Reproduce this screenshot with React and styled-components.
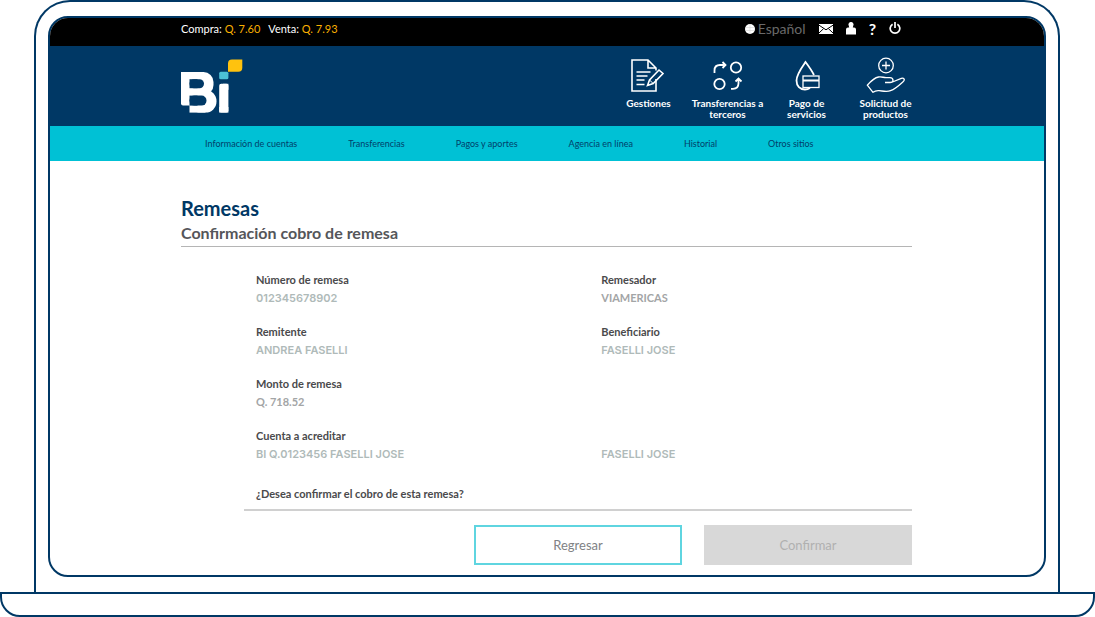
import React from 'react';
import styled, { createGlobalStyle } from 'styled-components';

const GlobalStyle = createGlobalStyle`
  * {
    box-sizing: border-box;
  }

  body {
    margin: 0;
    background: #fff;
    font-family: Lato, 'Open Sans', sans-serif;
  }

  h1, h2, p, dl, dd {
    margin: 0;
  }

  button {
    font-family: inherit;
    cursor: pointer;
  }
`;

const Lid = styled.div`
  margin: 0 35px 0 34px;
  padding: 14px 12px 15px;
  border: 2px solid #003865;
  border-bottom: none;
  border-radius: 36px 36px 0 0;
`;

const Screen = styled.div`
  border: 2px solid #003865;
  border-radius: 20px;
  overflow: hidden;
`;

const Base = styled.div`
  height: 25px;
  border: 2px solid #003865;
  border-radius: 0 0 20px 20px;
`;

const TopBar = styled.div`
  display: flex;
  justify-content: space-between;
  align-items: flex-start;
  height: 28px;
  padding: 0 143px 0 131px;
  background: #000;
`;

const Rates = styled.p`
  display: flex;
  gap: 8px;
  padding-top: 3px;
  color: #fff;
  font-size: 11px;
  line-height: 16px;
`;

const Rate = styled.span`
  color: #f9b000;
`;

const Tools = styled.div`
  display: flex;
  align-items: center;
  gap: 13px;
  height: 22px;
`;

const ToolButton = styled.button`
  display: flex;
  align-items: center;
  gap: 3px;
  padding: 0;
  border: none;
  background: none;
  color: ${(props) => props.$color || '#fff'};
  font-size: ${(props) => props.$size || '14px'};
  font-weight: ${(props) => props.$weight || 400};
  line-height: 20px;
`;

const Header = styled.header`
  display: flex;
  justify-content: space-between;
  height: 80px;
  padding: 11px 119px 0 131px;
  background: #003865;
`;

const Brand = styled.div`
  padding-top: 2px;
`;

const Shortcuts = styled.nav`
  display: grid;
  grid-template-columns: repeat(4, 79px);
`;

const Shortcut = styled.a`
  display: flex;
  flex-direction: column;
  align-items: center;
  gap: 5px;
  padding: 0 3px;
  color: #fff;
  font-size: 10px;
  font-weight: 700;
  line-height: 11px;
  text-align: center;
  text-decoration: none;
`;

const MainNav = styled.nav`
  display: flex;
  align-items: center;
  gap: 51px;
  height: 35px;
  padding: 0 131px 0 155px;
  background: #00c1d5;
`;

const NavLink = styled.a`
  color: #00406a;
  font-size: 9px;
  line-height: 16px;
  text-decoration: none;
  white-space: nowrap;
`;

const Content = styled.main`
  padding: 35px 132px 10px 131px;
`;

const Title = styled.h1`
  color: #003865;
  font-size: 20px;
  font-weight: 700;
  line-height: 24px;
`;

const Subtitle = styled.h2`
  border-bottom: 1px solid #b5b5b5;
  color: #55565a;
  font-size: 16px;
  font-weight: 700;
  line-height: 26px;
`;

const Details = styled.dl`
  display: grid;
  grid-template-columns: 10fr 9fr;
  row-gap: 16px;
  margin-top: 24px;
  padding-left: 75px;
`;

const Field = styled.div`
  display: flex;
  flex-direction: column;
  justify-content: flex-end;
`;

const Label = styled.dt`
  color: #4a4a4c;
  font-size: 11px;
  font-weight: 700;
  line-height: 18px;
`;

const Value = styled.dd`
  color: ${(props) => (props.$lato ? '#a3a5a6' : '#afbab9')};
  font-family: ${(props) => (props.$lato ? 'Lato' : 'Inter')}, sans-serif;
  font-size: 11px;
  font-weight: ${(props) => (props.$lato ? 700 : 600)};
  line-height: 18px;
`;

const Question = styled.p`
  margin: 22px 0 0 63px;
  padding: 0 0 6px 12px;
  border-bottom: 2px solid #d0d0d0;
  color: #4a4a4c;
  font-size: 11px;
  font-weight: 700;
  line-height: 18px;
`;

const Actions = styled.div`
  display: flex;
  justify-content: flex-end;
  gap: 22px;
  margin-top: 14px;
`;

const ActionButton = styled.button`
  width: 208px;
  height: 40px;
  border: 2px solid ${(props) => (props.disabled ? '#d8d8d8' : '#5fd5e0')};
  background: ${(props) => (props.disabled ? '#d8d8d8' : '#fff')};
  color: ${(props) => (props.disabled ? '#b0b0b0' : '#808285')};
  font-size: 13px;
`;

const Logo = () => (
  <svg width="62" height="54" viewBox="0 0 62 54" role="img" aria-label="Bi">
    <g fill="#fff">
      <rect x="0" y="13" width="32.5" height="23" rx="10" />
      <rect x="0" y="13" width="18" height="33.6" rx="2" />
      <rect x="0" y="13" width="8" height="8" />
      <rect x="8.5" y="31" width="27" height="22.6" rx="11" />
      <rect x="8.5" y="38" width="16" height="15.6" />
      <rect x="38.2" y="24.8" width="9.2" height="28.8" rx="2" />
      <rect x="42" y="24.8" width="5.4" height="6" />
      <rect x="38.2" y="48" width="9.2" height="5.6" />
    </g>
    <g fill="#003865">
      <rect x="8.5" y="20.2" width="14.5" height="9" rx="4.5" />
      <rect x="8.5" y="20.2" width="8" height="9" />
      <rect x="8.5" y="36.6" width="17" height="10" rx="5" />
      <rect x="8.5" y="36.6" width="8" height="10" />
    </g>
    <rect x="38.2" y="12.8" width="9.2" height="7.4" rx="1.5" fill="#4bc1d6" />
    <path d="M51 .4h10.3V8.8a4 4 0 0 1-4 4H47V4.4a4 4 0 0 1 4-4z" fill="#ffc20e" />
  </svg>
);

const GlobeIcon = () => (
  <svg width="10" height="10" viewBox="0 0 10 10">
    <circle cx="5" cy="5" r="5" fill="#fff" />
    <path d="M.5 3.5h9M.5 6.5h9M5 0v10" stroke="#ccc" strokeWidth=".5" />
  </svg>
);

const MailIcon = () => (
  <svg width="14" height="10" viewBox="0 0 14 10">
    <rect width="14" height="10" fill="#fff" />
    <path d="M0 1.2l7 4.6 7-4.6M0 9l4.6-4.4M14 9L9.4 4.6" fill="none" stroke="#000" strokeWidth="1" />
  </svg>
);

const UserIcon = () => (
  <svg width="10" height="14" viewBox="0 0 10 14">
    <path d="M5 0a2.5 2.5 0 0 1 2.3 3.6L6.8 5.500H8a2 2 0 0 1 2 2V12.500H0V7.500a2 2 0 0 1 2-2h1.200l-.5-1.900A2.500 2.500 0 0 1 5 0z" fill="#fff" />
  </svg>
);

const PowerIcon = () => (
  <svg width="12" height="14" viewBox="0 0 12 14" fill="none" stroke="#fff" strokeWidth="1.7">
    <path d="M3.6 2.2a4.8 4.8 0 1 0 4.8 0M6 0v6" />
  </svg>
);

const DocumentIcon = () => (
  <svg width="36" height="36" viewBox="2 0 36 36" fill="none" stroke="#fff" strokeWidth="1.6">
    <path d="M27 13.5V11L19 3H3v31h24V22M19 3v8h8" />
    <path d="M7.5 15h14M7.5 19h11M7.5 23h8M7.5 27.5h8" />
    <path d="M18.5 28.5l2-5.5L30 13l4 3.5-9.8 10z" />
    <path d="M20.5 23l3.7 3.5" strokeWidth="1" />
  </svg>
);

const TransferIcon = () => (
  <svg width="36" height="36" viewBox="0 0 36 36" fill="none" stroke="#fff" strokeWidth="1.8">
    <circle cx="26" cy="10.5" r="5.2" />
    <circle cx="9.5" cy="27" r="5.2" />
    <path d="M4.500 16v-2.500C4.500 10 6.500 8 10 8h4.500M12.500 5l3 3-3 3" />
    <path d="M21 31.800h2c3.500 0 5.500-2 5.500-5.500v-4M25.500 24.500l3-3 3 3" />
  </svg>
);

const PaymentIcon = () => (
  <svg width="36" height="36" viewBox="0 0 36 36" fill="none" stroke="#fff" strokeWidth="1.8">
    <path d="M25 18C22.5 13 19.5 9 16.5 5 12 11.500 7.500 17.500 7.500 23.500 7.500 29 11 32.500 16 32.500c2 0 3.500-.500 5-1.500" />
    <rect x="14" y="19" width="16" height="11.500" strokeWidth="1.300" />
    <path d="M14 23.500h16" strokeWidth="2" />
  </svg>
);

const HandIcon = () => (
  <svg width="40" height="36" viewBox="0 0 40 36" fill="none" stroke="#fff" strokeWidth="1.300" strokeLinejoin="round">
    <circle cx="20" cy="8.500" r="7.300" />
    <path d="M20 4.500v8M16 8.500h8" />
    <path d="M19 25.500h5c4 0 4-4.500 0-4.800h-4c-3-.2-4.500-1.200-7.500-.7C8 20.800 5 24 1.300 28.200L7 35.300c2-1.500 3.500-1.800 6-1.600 4 .3 8 1.300 11.500 0 5-1.800 9-5.700 12.800-9.200 2-2 .5-4-2-3.200L26.500 25" />
  </svg>
);

const shortcuts = [
  { label: 'Gestiones', icon: <DocumentIcon /> },
  { label: 'Transferencias a terceros', icon: <TransferIcon /> },
  { label: 'Pago de servicios', icon: <PaymentIcon /> },
  { label: 'Solicitud de productos', icon: <HandIcon /> },
];

const links = ['Información de cuentas', 'Transferencias', 'Pagos y aportes', 'Agencia en línea', 'Historial', 'Otros sitios'];

const fields = [
  { label: 'Número de remesa', value: '012345678902' },
  { label: 'Remesador', value: 'VIAMERICAS', lato: true },
  { label: 'Remitente', value: 'ANDREA FASELLI' },
  { label: 'Beneficiario', value: 'FASELLI JOSE' },
  { label: 'Monto de remesa', value: 'Q. 718.52', lato: true },
  {},
  { label: 'Cuenta a acreditar', value: 'BI Q.0123456 FASELLI JOSE' },
  { value: 'FASELLI JOSE' },
];

const App = () => {
  return (
    <>
      <GlobalStyle />
      <Lid>
        <Screen>
          <TopBar>
            <Rates>
              <span>Compra: <Rate>Q. 7.60</Rate></span>
              <span>Venta: <Rate>Q. 7.93</Rate></span>
            </Rates>
            <Tools>
              <ToolButton $color="#6a6a6a"><GlobeIcon />Español</ToolButton>
              <ToolButton aria-label="Mensajes"><MailIcon /></ToolButton>
              <ToolButton aria-label="Perfil"><UserIcon /></ToolButton>
              <ToolButton $size="16px" $weight={700}>?</ToolButton>
              <ToolButton aria-label="Salir"><PowerIcon /></ToolButton>
            </Tools>
          </TopBar>
          <Header>
            <Brand>
              <Logo />
            </Brand>
            <Shortcuts>
              {shortcuts.map((item) => (
                <Shortcut href="#" key={item.label}>
                  {item.icon}
                  {item.label}
                </Shortcut>
              ))}
            </Shortcuts>
          </Header>
          <MainNav>
            {links.map((link) => (
              <NavLink href="#" key={link}>{link}</NavLink>
            ))}
          </MainNav>
          <Content>
            <Title>Remesas</Title>
            <Subtitle>Confirmación cobro de remesa</Subtitle>
            <Details>
              {fields.map((field, index) => (
                <Field key={index}>
                  {field.label && <Label>{field.label}</Label>}
                  {field.value && <Value $lato={field.lato}>{field.value}</Value>}
                </Field>
              ))}
            </Details>
            <Question>¿Desea confirmar el cobro de esta remesa?</Question>
            <Actions>
              <ActionButton type="button">Regresar</ActionButton>
              <ActionButton type="button" disabled>Confirmar</ActionButton>
            </Actions>
          </Content>
        </Screen>
      </Lid>
      <Base />
    </>
  );
};

export default App;
